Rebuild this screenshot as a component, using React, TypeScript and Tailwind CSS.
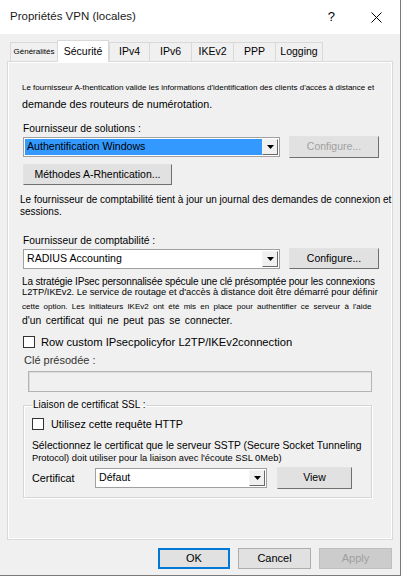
import type { ReactNode } from "react";

function DropArrow() {
  return (
    <div className="flex w-[16px] items-center justify-center border border-t-[#f4f4f4] border-l-[#f4f4f4] border-r-[#696969] border-b-[#696969] bg-[#f0f0f0]">
      <svg width="7" height="4" viewBox="0 0 7 4">
        <path d="M0 0h7L3.5 4z" fill="#000" />
      </svg>
    </div>
  );
}

function Combo({
  value,
  selected,
  className,
}: {
  value: string;
  selected?: boolean;
  className: string;
}) {
  return (
    <div
      className={`flex h-[20px] border border-[#a0a0a0] bg-white p-[1px] ${className}`}
    >
      <div
        className={`flex flex-1 items-center pl-[2px] text-[10.6px] text-black ${
          selected ? "bg-[#3399ff]" : ""
        }`}
      >
        {value}
      </div>
      <DropArrow />
    </div>
  );
}

function Btn({
  children,
  className,
  disabled,
}: {
  children: ReactNode;
  className: string;
  disabled?: boolean;
}) {
  return (
    <div
      className={`flex items-center justify-center border border-t-[#e3e3e3] border-l-[#e3e3e3] border-r-[#6f6f6f] border-b-[#6f6f6f] bg-[#e1e1e1] text-[10.5px] ${
        disabled ? "text-[#a0a0a0]" : "text-black"
      } ${className}`}
    >
      {children}
    </div>
  );
}

function Check() {
  return <div className="h-[12px] w-[12px] shrink-0 border border-[#333333] bg-white" />;
}

const tabs = [
  { label: "Généralités", w: "w-[47px]", size: "text-[8px]" },
  { label: "Sécurité", w: "w-[52px]", size: "text-[10.5px]", active: true },
  { label: "IPv4", w: "w-[40px]", size: "text-[10.5px]" },
  { label: "IPv6", w: "w-[42px]", size: "text-[10.5px]" },
  { label: "IKEv2", w: "w-[42px]", size: "text-[10.5px]" },
  { label: "PPP", w: "w-[42px]", size: "text-[10.5px]" },
  { label: "Logging", w: "w-[48px]", size: "text-[10.5px]" },
];

export default function App() {
  return (
    <div className="h-[576px] w-[402px] overflow-hidden bg-white font-['Liberation_Sans',Arial,sans-serif] text-black">
      <div className="flex h-[576px] w-[401px] flex-col border-r border-b border-[#7a7a7a] bg-[#f0f0f0]">
        {/* barre de titre */}
        <div className="flex h-[34px] items-center bg-white pl-[10px]">
          <span className="text-[11.5px] text-[#1a1a1a]">Propriétés VPN (locales)</span>
          <span className="ml-auto mr-[36px] text-[13px]">?</span>
          <svg width="11" height="11" viewBox="0 0 11 11" className="mr-[18px]">
            <path d="M0.5 0.5l10 10M10.5 0.5l-10 10" stroke="#000" strokeWidth="1" />
          </svg>
        </div>

        {/* onglets */}
        <div className="relative z-10 flex h-[27px] items-end pl-[10px]">
          {tabs.map((t, i) =>
            t.active ? (
              <div
                key={t.label}
                className={`-mb-[1px] flex h-[22px] items-center justify-center border border-b-0 border-[#d9d9d9] bg-white ${t.w} ${t.size}`}
              >
                {t.label}
              </div>
            ) : (
              <div
                key={t.label}
                className={`flex h-[19px] items-center justify-center border-t border-[#d9d9d9] ${
                  i === 0 ? "border-l" : ""
                } ${i === tabs.length - 1 ? "border-r" : ""} ${
                  i > 1 ? "border-l" : ""
                } ${t.w} ${t.size}`}
              >
                {t.label}
              </div>
            )
          )}
        </div>

        {/* page */}
        <div className="mx-[7px] h-[479px] whitespace-nowrap border border-[#d9d9d9] shadow-[inset_1px_1px_0_#ffffff,inset_-1px_-1px_0_#ffffff] pl-[14px]">
          <div className="mt-[20px] text-[8px] leading-[12px]">
            Le fournisseur A-thentication valide les informations d'identification des clients d'accès à distance et
          </div>
          <div className="mt-[2px] text-[10.7px] leading-[16px]">
            demande des routeurs de numérotation.
          </div>

          <div className="ml-[1px] mt-[10px] text-[10.3px] leading-[14px]">
            Fournisseur de solutions :
          </div>
          <div className="ml-[1px] flex h-[22px] items-center">
            <Combo value="Authentification Windows" selected className="w-[257px]" />
            <Btn disabled className="ml-[9px] h-[22px] w-[90px]">
              Configure...
            </Btn>
          </div>

          <Btn className="ml-[1px] mt-[6px] h-[21px] w-[149px] text-[10.3px]">
            Méthodes A-Rhentication...
          </Btn>

          <div className="-ml-[2px] mt-[9px] text-[10px] leading-[12px]">
            Le fournisseur de comptabilité tient à jour un journal des demandes de connexion et
            <br />
            sessions.
          </div>

          <div className="ml-[1px] mt-[16px] text-[10.3px] leading-[14px]">
            Fournisseur de comptabilité :
          </div>
          <div className="ml-[1px] flex h-[21px] items-center">
            <Combo value="RADIUS Accounting" className="w-[257px]" />
            <Btn className="ml-[9px] h-[21px] w-[90px]">Configure...</Btn>
          </div>

          <div className="mt-[8px]">
            <div className="text-[10px] leading-[10px] tracking-[-0.15px]">
              La stratégie IPsec personnalisée spécule une clé présomptée pour les connexions
            </div>
            <div className="text-[9.3px] leading-[10px]">
              L2TP/IKEv2. Le service de routage et d'accès à distance doit être démarré pour définir
            </div>
            <div className="mt-[4px] text-[8px] leading-[12px] [word-spacing:2px]">
              cette option. Les initiateurs IKEv2 ont été mis en place pour authentifier ce serveur à l'aide
            </div>
            <div className="mt-[1px] text-[10.3px] leading-[14px] [word-spacing:1.8px]">
              d'un certificat qui ne peut pas se connecter.
            </div>
          </div>

          <div className="ml-[1px] mt-[7px] flex h-[14px] items-center">
            <Check />
            <span className="ml-[6px] text-[11.2px] leading-[14px]">
              Row custom IPsecpolicyfor L2TP/IKEv2connection
            </span>
          </div>

          <div className="ml-[2px] mt-[4px] text-[11px] leading-[14px] text-[#333333]">
            Clé présodée :
          </div>
          <div className="ml-[6px] mt-[4px] h-[21px] w-[344px] border border-[#b4b4b4] bg-[#f0f0f0] shadow-[inset_1px_1px_0_#dcdcdc]" />

          <fieldset className="ml-[1px] mt-[6px] w-[349px] border border-[#d5d5d5] px-[8px] pb-[8px] shadow-[inset_1px_1px_0_#ffffff,1px_1px_0_#ffffff]">
            <legend className="px-[1px] text-[10px] leading-[14px]">
              Liaison de certificat SSL :
            </legend>
            <div className="mt-[5px] flex h-[14px] items-center">
              <Check />
              <span className="ml-[7px] text-[10.8px] leading-[14px]">
                Utilisez cette requête HTTP
              </span>
            </div>
            <div className="mt-[8px] leading-[13px]">
              <div className="text-[10.3px]">
                Sélectionnez le certificat que le serveur SSTP (Secure Socket Tunneling
              </div>
              <div className="text-[9.3px]">
                Protocol) doit utiliser pour la liaison avec l'écoute SSL 0Meb)
              </div>
            </div>
            <div className="mt-[2px] flex h-[22px] items-center">
              <span className="w-[63px] text-[10.8px]">Certificat</span>
              <Combo value="Défaut" className="w-[172px]" />
              <Btn className="ml-[10px] h-[22px] w-[75px]">View</Btn>
            </div>
          </fieldset>
        </div>

        {/* boutons */}
        <div className="mt-[8px] flex justify-end gap-[8px] pr-[8px]">
          <div className="flex h-[21px] w-[72px] items-center justify-center border-2 border-[#0078d7] bg-[#e1e1e1] text-[11px]">
            OK
          </div>
          <div className="flex h-[21px] w-[73px] items-center justify-center border border-[#adadad] bg-[#e1e1e1] text-[11px]">
            Cancel
          </div>
          <div className="flex h-[21px] w-[73px] items-center justify-center border border-[#bfbfbf] bg-[#cccccc] text-[11px] text-[#a0a0a0]">
            Apply
          </div>
        </div>
      </div>
    </div>
  );
}
